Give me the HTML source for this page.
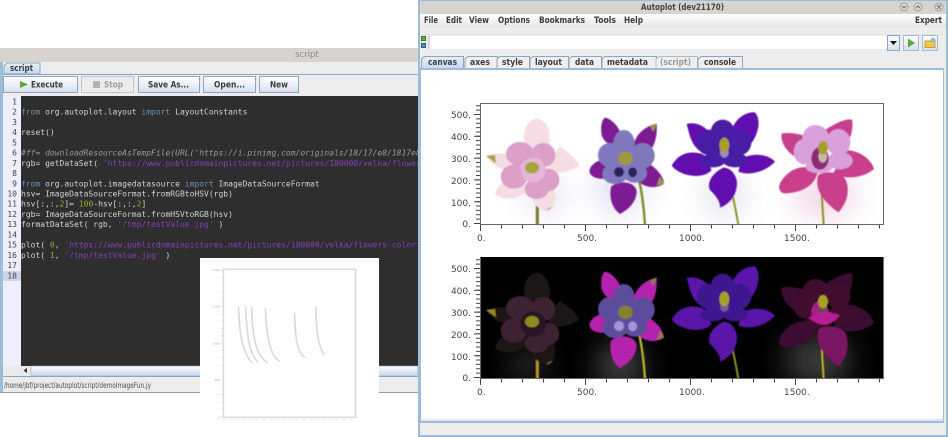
<!DOCTYPE html>
<html><head><meta charset="utf-8"><style>
html,body{margin:0;padding:0;background:#fff;width:948px;height:437px;overflow:hidden}
svg{display:block;filter:blur(.35px)}
text{font-family:"DejaVu Sans","Liberation Sans",sans-serif}
.ui{font-weight:bold;font-size:8.5px;fill:#3c3c3c}
.code{font-family:"DejaVu Sans Mono","Liberation Mono",monospace;font-size:8px;fill:#d2d2d2;white-space:pre}
.num{font-family:"DejaVu Sans Mono","Liberation Mono",monospace;font-size:8px;fill:#444;text-anchor:end}
.k{fill:#6f8fb0}.s{fill:#8240b8}.c{fill:#9a9a9a;font-style:italic}.n{fill:#a0a030}
.ax{font-size:9px;fill:#444}
.axr{font-size:9px;fill:#444;text-anchor:end}
.a{fill:var(--a)}.b{fill:var(--b)}.e{fill:var(--e)}.y{fill:var(--y)}.t{stroke:var(--t);fill:none}.g{fill:var(--g)}
</style></head><body>
<svg width="948" height="437" viewBox="0 0 948 437" xmlns="http://www.w3.org/2000/svg">
<defs>
<linearGradient id="btn" x1="0" y1="0" x2="0" y2="1"><stop offset="0" stop-color="#fff"/><stop offset="1" stop-color="#d5e0ec"/></linearGradient>
<linearGradient id="menu" x1="0" y1="0" x2="0" y2="1"><stop offset="0" stop-color="#fff"/><stop offset="1" stop-color="#e6e6e6"/></linearGradient>
<linearGradient id="tab" x1="0" y1="0" x2="0" y2="1"><stop offset="0" stop-color="#e6eff8"/><stop offset="1" stop-color="#c5d9ee"/></linearGradient>
<linearGradient id="sb" x1="0" y1="0" x2="0" y2="1"><stop offset="0" stop-color="#fff"/><stop offset="1" stop-color="#c6d8ea"/></linearGradient>
<clipPath id="ed"><rect x="21" y="96" width="397" height="270"/></clipPath>
<clipPath id="p1"><rect x="480" y="103" width="404" height="121"/></clipPath>
<clipPath id="p2"><rect x="480" y="257" width="404" height="121"/></clipPath>
<filter id="bl" x="-10%" y="-10%" width="120%" height="120%"><feGaussianBlur stdDeviation=".5"/></filter>
<filter id="bg" x="-50%" y="-50%" width="200%" height="200%"><feGaussianBlur stdDeviation="14"/></filter>
<g id="f1">
<path class="t" stroke-width="9" d="M292 330V390"/>
<path class="a" d="M262 175C240 120 255 78 290 70C325 75 340 125 322 170Z"/>
<path class="a" d="M138 183C170 170 215 170 245 200C215 235 165 228 138 183Z"/>
<path class="a" d="M325 190L360 155C390 175 412 195 418 213C390 230 345 240 325 232Z"/>
<path class="a" d="M240 255C205 250 175 262 165 297C195 320 240 315 265 280Z"/>
<path class="a" d="M280 295C272 315 285 340 322 350C350 335 350 305 338 275Z"/>
<path class="y" d="M138 183L165 180L168 205Z"/><path class="y" d="M320 348L340 335L325 340Z"/>
<ellipse class="b" cx="240" cy="177" rx="42" ry="36"/><ellipse class="b" cx="310" cy="180" rx="36" ry="36"/>
<ellipse class="b" cx="222" cy="245" rx="40" ry="36"/><ellipse class="b" cx="322" cy="255" rx="36" ry="34"/>
<ellipse class="b" cx="290" cy="282" rx="36" ry="30"/>
<ellipse class="g" cx="280" cy="225" rx="38" ry="38"/>
<ellipse class="y" cx="276" cy="218" rx="21" ry="17"/>
</g>
<g id="f2">
<path class="t" stroke-width="7" d="M597 255C608 300 612 345 615 390"/>
<path class="a" d="M548 130C535 160 495 155 485 120C480 90 488 68 497 68C520 75 540 100 548 130Z"/>
<path class="a" d="M580 155C585 115 620 92 650 86C653 125 642 160 625 170Z"/>
<path class="a" d="M448 228C452 205 480 192 495 195L505 250C470 255 450 245 448 228Z"/>
<path class="a" d="M625 205C655 222 672 250 672 266C650 282 615 280 590 255Z"/>
<path class="a" d="M512 280C515 260 585 250 590 290C588 325 562 345 540 357C518 342 508 312 512 280Z"/>
<path class="y" d="M630 93L650 86L640 110Z"/><path class="y" d="M650 272L672 266L660 245Z"/>
<ellipse class="b" cx="552" cy="145" rx="32" ry="40"/><ellipse class="b" cx="510" cy="180" rx="36" ry="36"/>
<ellipse class="b" cx="608" cy="182" rx="36" ry="38"/><ellipse class="b" cx="525" cy="237" rx="38" ry="30"/>
<ellipse class="b" cx="585" cy="235" rx="36" ry="28"/>
<ellipse class="b" cx="556" cy="195" rx="40" ry="40"/>
<ellipse class="g" cx="537" cy="231" rx="15" ry="15"/><ellipse class="g" cx="578" cy="232" rx="13" ry="15"/>
<ellipse class="y" cx="556" cy="190" rx="22" ry="20"/>
</g>
<g id="f3">
<path class="t" stroke-width="6" d="M187 300C195 330 200 360 205 390"/>
<path class="a" d="M185 110C190 75 225 50 255 52C275 75 265 120 240 150L205 165Z"/>
<path class="a" d="M130 125C105 90 75 80 50 87C60 125 65 155 100 175Z"/>
<path class="a" d="M100 178C60 165 25 175 5 212C30 245 100 255 125 225Z"/>
<path class="a" d="M215 190C255 172 295 178 315 200C290 228 240 245 205 230Z"/>
<path class="a" d="M160 218C125 235 110 265 120 285C135 300 152 318 150 338C185 325 205 290 200 255C195 235 180 218 160 218Z"/>
<ellipse class="b" cx="158" cy="112" rx="36" ry="38"/><ellipse class="b" cx="115" cy="142" rx="34" ry="38"/>
<ellipse class="b" cx="210" cy="142" rx="34" ry="38"/><ellipse class="b" cx="128" cy="197" rx="38" ry="20"/>
<ellipse class="b" cx="195" cy="195" rx="38" ry="22"/>
<ellipse class="b" cx="160" cy="170" rx="36" ry="30"/>
<ellipse class="e" cx="163" cy="172" rx="13" ry="16"/>
<ellipse class="y" cx="163" cy="150" rx="15" ry="22"/>
</g>
<g id="f4">
<path class="t" stroke-width="6" d="M455 295C457 330 459 360 461 390"/>
<path class="a" d="M465 105C500 82 530 70 546 74C552 105 540 140 515 165Z"/>
<path class="a" d="M335 116C365 110 405 120 415 130L385 190C350 175 330 140 335 116Z"/>
<path class="a" d="M445 225C400 205 355 220 330 265C322 285 335 297 348 295C395 292 435 275 445 225Z"/>
<path class="a" d="M525 165C570 165 605 195 612 222C580 250 525 255 490 235Z"/>
<path class="a" d="M445 240C435 270 445 310 505 352C535 320 540 280 525 250C500 228 465 228 445 240Z"/>
<ellipse class="b" cx="437" cy="130" rx="40" ry="40"/><ellipse class="b" cx="403" cy="170" rx="32" ry="38"/>
<ellipse class="b" cx="505" cy="142" rx="36" ry="40"/><ellipse class="b" cx="510" cy="197" rx="38" ry="26"/>
<ellipse class="b" cx="447" cy="215" rx="40" ry="20"/>
<ellipse class="g" cx="450" cy="190" rx="26" ry="34"/>
<ellipse class="e" cx="458" cy="185" rx="13" ry="18"/>
<ellipse class="y" cx="459" cy="158" rx="15" ry="20"/>
</g>
</defs>

<rect width="948" height="437" fill="#fff"/>

<!-- script window -->
<rect x="0" y="48" width="420" height="345" fill="#9dbcd8"/>
<rect x="0" y="48" width="420" height="14" fill="#d7d3cf"/>
<text x="295" y="57" font-size="8.5" fill="#8a8a8a">script</text>
<rect x="3" y="62" width="416" height="330" fill="#ececec"/>
<path d="M4 74V66L7 63H40V74Z" fill="url(#tab)" stroke="#8ba6c2" stroke-width="1"/>
<text class="ui" x="10" y="71" textLength="23" lengthAdjust="spacingAndGlyphs">script</text>
<path d="M3 74.5H419" stroke="#8ba6c2"/>
<rect x="3" y="75" width="416" height="21" fill="#ededed"/>
<g fill="url(#btn)" stroke="#8ba6c2">
<rect x="3.5" y="76.5" width="74" height="16"/>
<rect x="138.5" y="76.5" width="61" height="16"/>
<rect x="203.5" y="76.5" width="52" height="16"/>
<rect x="259.5" y="76.5" width="39" height="16"/>
</g>
<rect x="81.5" y="76.5" width="52" height="16" fill="#ececec" stroke="#c4c4c4"/>
<path d="M20 81L28 84.5L20 88Z" fill="#5fa83c"/>
<rect x="93" y="81" width="7" height="7" fill="#b4b4b4"/>
<text class="ui" x="31" y="87.5" textLength="32" lengthAdjust="spacingAndGlyphs">Execute</text>
<text class="ui" x="104" y="87.5" textLength="19" lengthAdjust="spacingAndGlyphs" style="fill:#a0a0a0">Stop</text>
<text class="ui" x="148" y="87.5" textLength="41" lengthAdjust="spacingAndGlyphs">Save As...</text>
<text class="ui" x="214" y="87.5" textLength="31" lengthAdjust="spacingAndGlyphs">Open...</text>
<text class="ui" x="270" y="87.5" textLength="18" lengthAdjust="spacingAndGlyphs">New</text>

<rect x="21" y="96" width="397" height="270" fill="#2e2e2e"/>
<rect x="3" y="96" width="18" height="270" fill="#eeeefc"/>
<rect x="3" y="271" width="18" height="10" fill="#cdd4ea"/>
<g>
<text class="num" x="17" y="104.5">1</text><text class="num" x="17" y="114.7">2</text><text class="num" x="17" y="125">3</text><text class="num" x="17" y="135.2">4</text><text class="num" x="17" y="145.4">5</text><text class="num" x="17" y="155.6">6</text><text class="num" x="17" y="165.8">7</text><text class="num" x="17" y="176.1">8</text><text class="num" x="17" y="186.3">9</text><text class="num" x="17" y="196.5">10</text><text class="num" x="17" y="206.7">11</text><text class="num" x="17" y="217">12</text><text class="num" x="17" y="227.2">13</text><text class="num" x="17" y="237.4">14</text><text class="num" x="17" y="247.6">15</text><text class="num" x="17" y="257.8">16</text><text class="num" x="17" y="268.1">17</text><text class="num" x="17" y="278.3">18</text>
</g>
<g clip-path="url(#ed)">
<text class="code" x="21" y="114.7" xml:space="preserve"><tspan class="k">from</tspan> org.autoplot.layout <tspan class="k">import</tspan> LayoutConstants</text>
<text class="code" x="21" y="135.2">reset()</text>
<text class="code c" x="21" y="155.6">#ff= downloadResourceAsTempFile(URL('https://i.pinimg.com/originals/18/17/e8/1817e8</text>
<text class="code" x="21" y="165.8" xml:space="preserve">rgb= getDataSet( <tspan class="s">'https://www.publicdomainpictures.net/pictures/180000/velka/flowers-colorful</tspan></text>
<text class="code" x="21" y="186.3" xml:space="preserve"><tspan class="k">from</tspan> org.autoplot.imagedatasource <tspan class="k">import</tspan> ImageDataSourceFormat</text>
<text class="code" x="21" y="196.5">hsv= ImageDataSourceFormat.fromRGBtoHSV(rgb)</text>
<text class="code" x="21" y="206.7" xml:space="preserve">hsv[:,:,<tspan class="n">2</tspan>]= <tspan class="n">100</tspan>-hsv[:,:,<tspan class="n">2</tspan>]</text>
<text class="code" x="21" y="217">rgb= ImageDataSourceFormat.fromHSVtoRGB(hsv)</text>
<text class="code" x="21" y="227.2" xml:space="preserve">formatDataSet( rgb, <tspan class="s">'/tmp/testValue.jpg'</tspan> )</text>
<text class="code" x="21" y="247.6" xml:space="preserve">plot( <tspan class="n">0</tspan>, <tspan class="s">'https://www.publicdomainpictures.net/pictures/180000/velka/flowers-colorful</tspan></text>
<text class="code" x="21" y="257.8" xml:space="preserve">plot( <tspan class="n">1</tspan>, <tspan class="s">'/tmp/testValue.jpg'</tspan> )</text>
</g>
<rect x="3" y="366" width="28" height="10" fill="#eaeaea"/>
<rect x="31" y="366" width="387" height="10" fill="url(#sb)" stroke="#8ba6c2" stroke-width=".6"/>
<path d="M27 368V373L23.5 370.5Z" fill="#333"/>
<path d="M3 376.5H419" stroke="#8ba6c2"/>
<text x="4" y="388" font-size="8" fill="#4a4a4a" textLength="147" lengthAdjust="spacingAndGlyphs">/home/jbf/project/autoplot/script/demoImageFun.jy</text>
<path d="M0 392.5H420" stroke="#9a9a9a"/>

<!-- overlay image -->
<rect x="200" y="258" width="179" height="179" fill="#fff"/>
<g transform="translate(195 255) scale(.33333)" fill="none" stroke="#dcdcdc">
<rect x="85" y="43" width="397" height="444" stroke-width="5"/>
<path d="M80 43V487" stroke-width="6" stroke-dasharray="3 19" stroke="#e6e6e6"/>
<path d="M85 493H482" stroke-width="6" stroke-dasharray="3 17" stroke="#e6e6e6"/>
<g stroke-width="5" stroke-linecap="round" stroke="#dadada">
<path d="M131 157C133 230 140 290 170 322"/>
<path d="M152 157C155 230 160 290 187 320"/>
<path d="M170 157C172 240 180 295 215 322"/>
<path d="M211 162C215 240 222 295 252 318"/>
<path d="M299 175C300 240 305 290 328 306"/>
<path d="M363 157C363 220 368 275 388 298"/>
</g>
<g stroke="none" fill="#aaa" font-size="9" text-anchor="end">
<text x="74" y="48" font-size="9" style="fill:#aaa">2000</text>
<text x="74" y="158" font-size="9" style="fill:#aaa">1500</text>
<text x="74" y="268" font-size="9" style="fill:#aaa">1000</text>
<text x="74" y="378" font-size="9" style="fill:#aaa">500</text>
<text x="74" y="490" font-size="9" style="fill:#aaa">0</text>
</g>
</g>

<!-- autoplot window -->
<rect x="418" y="0" width="530" height="437" fill="#9dbcd8"/>
<rect x="420" y="1" width="526" height="13" fill="#d7d3cf"/>
<text x="641" y="10" font-size="8.5" font-weight="bold" fill="#444" textLength="83" lengthAdjust="spacingAndGlyphs">Autoplot (dev21170)</text>
<g fill="#d9d6d2" stroke="#999" stroke-width=".8"><circle cx="904" cy="7" r="4"/><circle cx="918" cy="7" r="4"/><circle cx="939" cy="7" r="4"/></g>
<path d="M902 6l2 2 2-2M916 8l2-2 2 2M937 5l4 4M941 5l-4 4" fill="none" stroke="#555" stroke-width=".8"/>
<rect x="420" y="14" width="526" height="13" fill="url(#menu)"/>
<rect x="420" y="27" width="526" height="408" fill="#ededed"/>
<g class="ui">
<text class="ui" x="424" y="23" textLength="14" lengthAdjust="spacingAndGlyphs">File</text>
<text class="ui" x="446" y="23" textLength="16" lengthAdjust="spacingAndGlyphs">Edit</text>
<text class="ui" x="469" y="23" textLength="20" lengthAdjust="spacingAndGlyphs">View</text>
<text class="ui" x="498" y="23" textLength="32" lengthAdjust="spacingAndGlyphs">Options</text>
<text class="ui" x="539" y="23" textLength="46" lengthAdjust="spacingAndGlyphs">Bookmarks</text>
<text class="ui" x="594" y="23" textLength="22" lengthAdjust="spacingAndGlyphs">Tools</text>
<text class="ui" x="624" y="23" textLength="19" lengthAdjust="spacingAndGlyphs">Help</text>
<text class="ui" x="915" y="23" textLength="27" lengthAdjust="spacingAndGlyphs">Expert</text>
</g>
<path d="M420 34.5H946" stroke="#e2e2e2"/>
<rect x="421.5" y="36.5" width="4" height="4" fill="#6fae3a" stroke="#3d7a22"/>
<rect x="421.5" y="43.5" width="4" height="4" fill="#4f94c4" stroke="#2d5e88"/>
<rect x="429" y="36" width="458" height="13" fill="#fff"/>
<path d="M429 36V49" stroke="#bbb"/>
<rect x="887.5" y="35.5" width="12" height="15" fill="url(#btn)" stroke="#8ba6c2"/>
<path d="M890 41H897L893.5 45Z" fill="#111"/>
<rect x="903.5" y="35.5" width="15" height="15" fill="url(#btn)" stroke="#a8bdd2"/>
<path d="M908 38.5L915 43L908 47.5Z" fill="#58a83e"/>
<rect x="922.5" y="35.5" width="15" height="15" fill="url(#btn)" stroke="#a8bdd2"/>
<path d="M925 41H931L932 40H935V47.5H925Z" fill="#f0c84a" stroke="#b88a20" stroke-width=".7"/>
<circle cx="933" cy="40" r="2.2" fill="#8cb8e4"/>

<!-- tabs -->
<g fill="#efefef" stroke="#8ba6c2">
<path d="M465 69V59L468 56.5H497.5V69"/>
<path d="M497 69V59L500 56.5H529.5V69"/>
<path d="M530 69V59L533 56.5H568.5V69"/>
<path d="M569 69V59L572 56.5H601.5V69"/>
<path d="M602 69V59L605 56.5H656.5V69"/>
<path d="M656 69V59L659 56.5H697.5V69" stroke="#a9bcd0"/>
<path d="M698 69V59L701 56.5H742.5V69"/>
</g>
<path d="M421.5 69V59L424.5 56.5H463.5V69" fill="url(#tab)" stroke="#8ba6c2"/>
<text class="ui" x="428" y="65" textLength="29" lengthAdjust="spacingAndGlyphs">canvas</text>
<text class="ui" x="470" y="65" textLength="20" lengthAdjust="spacingAndGlyphs">axes</text>
<text class="ui" x="502" y="65" textLength="21" lengthAdjust="spacingAndGlyphs">style</text>
<text class="ui" x="535" y="65" textLength="27" lengthAdjust="spacingAndGlyphs">layout</text>
<text class="ui" x="575" y="65" textLength="19" lengthAdjust="spacingAndGlyphs">data</text>
<text class="ui" x="607" y="65" textLength="41" lengthAdjust="spacingAndGlyphs">metadata</text>
<text class="ui" x="660" y="65" textLength="31" lengthAdjust="spacingAndGlyphs" style="fill:#9a9a9a">(script)</text>
<text class="ui" x="704" y="65" textLength="32" lengthAdjust="spacingAndGlyphs">console</text>

<rect x="420" y="68" width="524" height="355" fill="#9dbcd8"/>
<rect x="421" y="70" width="522" height="349" fill="#fff"/>
<rect x="421" y="419" width="522" height="2" fill="#dfe6ee"/>

<!-- plot 1 -->
<g clip-path="url(#p1)">
<rect x="480" y="103" width="404" height="121" fill="#fff"/>
<g filter="url(#bg)" opacity=".55">
<ellipse cx="545" cy="195" rx="22" ry="22" fill="#dcd6ec"/>
<ellipse cx="620" cy="190" rx="26" ry="22" fill="#c8c4e6"/>
<ellipse cx="725" cy="195" rx="22" ry="22" fill="#d0d0e0"/>
<ellipse cx="825" cy="195" rx="32" ry="24" fill="#e8b8d4"/>
</g>
<g filter="url(#bl)">
<g transform="translate(440 95) scale(.33333)">
<use href="#f1" style="--a:#f5dde3;--b:#dc9fc8;--e:#a49a20;--y:#a6a43c;--t:#6f7a2a;--g:#e6b4d4"/>
<use href="#f2" style="--a:#7d1f92;--b:#7f78bc;--e:#a49a20;--y:#9c9a3c;--t:#7a8a22;--g:#2c2060"/>
</g>
<g transform="translate(670 95) scale(.33333)">
<use href="#f3" style="--a:#6210ad;--b:#4a1aa5;--e:#9c8cc0;--y:#a8a025;--t:#90902a;--g:#4a1aa5"/>
<use href="#f4" style="--a:#c83f8c;--b:#d9a0dc;--e:#c8b8a0;--y:#a8a025;--t:#8a9225;--g:#8d2c78"/>
</g>
</g>
</g>
<rect x="480.5" y="103.5" width="403" height="121" fill="none" stroke="#666"/>

<!-- plot 2 -->
<rect x="480" y="257" width="404" height="121" fill="#000"/>
<g clip-path="url(#p2)">
<g filter="url(#bg)" opacity=".5">
<ellipse cx="620" cy="365" rx="24" ry="22" fill="#8a8a8a"/>
<ellipse cx="818" cy="360" rx="34" ry="26" fill="#777"/>
<ellipse cx="528" cy="365" rx="20" ry="16" fill="#555"/>
</g>
<g filter="url(#bl)" transform="translate(0 154)">
<g transform="translate(440 95) scale(.33333)">
<use href="#f1" style="--a:#1e1216;--b:#3c2030;--e:#a49a20;--y:#8f8a20;--t:#b8962a;--g:#2a1622"/>
<use href="#f2" style="--a:#b524ae;--b:#5c4d9c;--e:#a49a20;--y:#85802e;--t:#bcb428;--g:#a594d8"/>
</g>
<g transform="translate(670 95) scale(.33333)">
<use href="#f3" style="--a:#5a12a8;--b:#3c1590;--e:#7a5a9a;--y:#a8a025;--t:#90902a;--g:#3c1590"/>
<use href="#f4" style="--a:#3a0c32;--b:#40102f;--e:#6a4a50;--y:#a8a025;--t:#bcb428;--g:#a81c84"/>
</g>
<g transform="translate(670 95) scale(.33333)">
<path d="M445 240C435 270 445 310 505 352C535 320 540 280 525 250C500 228 465 228 445 240Z" fill="#7a1262"/>
<path d="M415 205C450 238 485 232 510 198L470 188Z" fill="#b81c92"/>
</g>
</g>
</g>
<path d="M883.5 257V378" stroke="#777"/>

<!-- axes ticks -->
<g fill="none" stroke="#444">
<path d="M480 226.5H884" stroke-width="4" stroke-dasharray="1 20"/>
<path d="M480 227H884" stroke-width="6" stroke-dasharray="1 104" transform="translate(0 1)"/>
<path d="M478 224V103" stroke-width="4" stroke-dasharray="1 3.36"/>
<path d="M477 224V103" stroke-width="6" stroke-dasharray="1 20.8"/>
<path d="M480 380.5H884" stroke-width="4" stroke-dasharray="1 20"/>
<path d="M480 381H884" stroke-width="6" stroke-dasharray="1 104" transform="translate(0 1)"/>
<path d="M478 378V257" stroke-width="4" stroke-dasharray="1 3.36"/>
<path d="M477 378V257" stroke-width="6" stroke-dasharray="1 20.8"/>
<path d="M480 224.5H884M480 378.5H884M480.5 103V224M480.5 257V378" stroke="#666"/>
</g>

<g>
<text class="axr" x="471" y="118">500.</text><text class="axr" x="471" y="140">400.</text><text class="axr" x="471" y="162">300.</text><text class="axr" x="471" y="184">200.</text><text class="axr" x="471" y="206">100.</text><text class="axr" x="471" y="227">0.</text>
<text class="ax" x="477" y="241">0.</text><text class="ax" x="577" y="241">500.</text><text class="ax" x="679" y="241">1000.</text><text class="ax" x="784" y="241">1500.</text>
<text class="axr" x="471" y="272">500.</text><text class="axr" x="471" y="294">400.</text><text class="axr" x="471" y="316">300.</text><text class="axr" x="471" y="338">200.</text><text class="axr" x="471" y="360">100.</text><text class="axr" x="471" y="381">0.</text>
<text class="ax" x="477" y="395">0.</text><text class="ax" x="577" y="395">500.</text><text class="ax" x="679" y="395">1000.</text><text class="ax" x="784" y="395">1500.</text>
</g>
</svg>
</body></html>
